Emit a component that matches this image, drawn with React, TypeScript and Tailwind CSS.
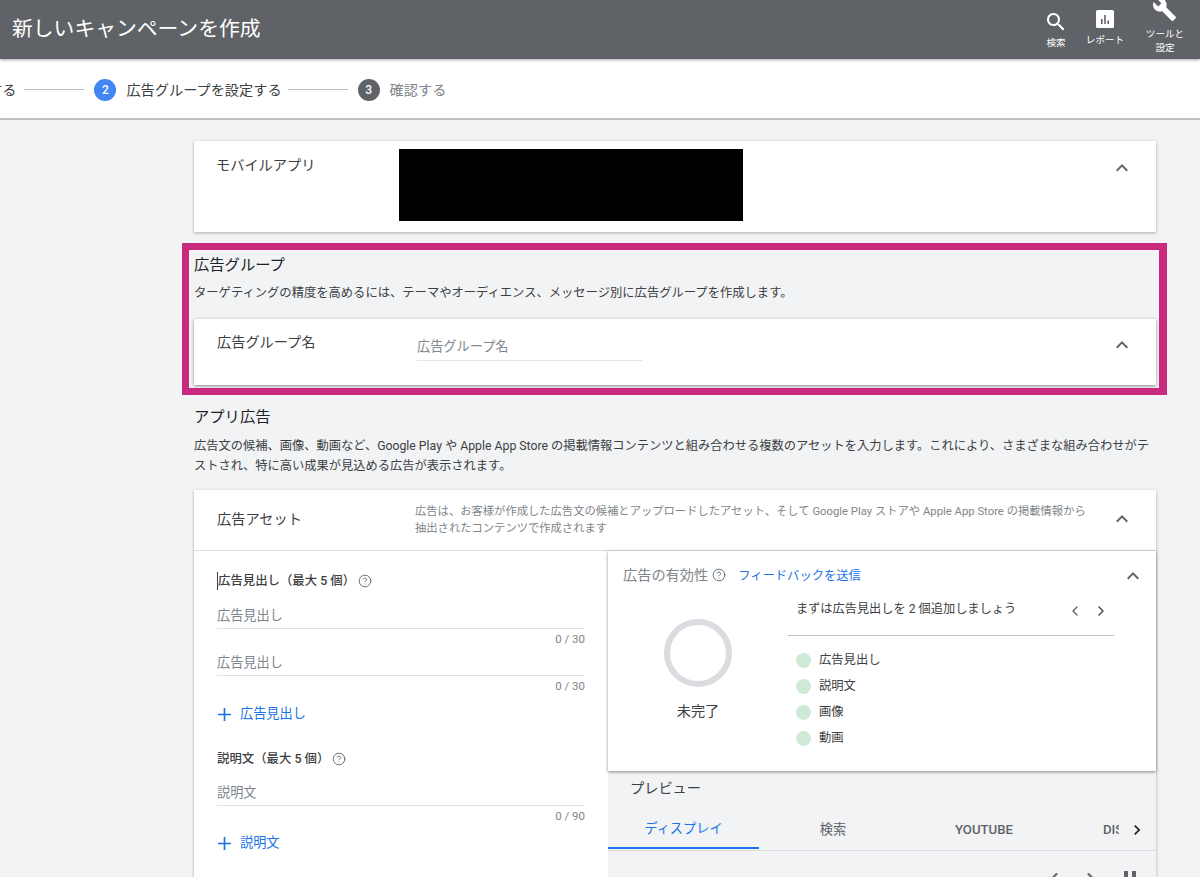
import { ChevronLeft, ChevronRight, CircleHelp } from "lucide-react";

const Help = () => <CircleHelp className="h-[14px] w-[14px] text-[#5f6368]" strokeWidth={1.5} />;

// material expand_less, 1:1 scale
const Collapse = ({ className }: { className: string }) => (
  <svg viewBox="4 4 16 16" className={`h-[16px] w-[16px] shrink-0 fill-[#5f6368] ${className}`}>
    <path d="M12 8l-6 6 1.41 1.41L12 10.83l4.59 4.58L18 14z" />
  </svg>
);

const AddIcon = () => (
  <svg viewBox="0 0 14 14" className="ml-[1px] h-[13px] w-[13px] fill-[#1a73e8]">
    <path d="M6.1 0h1.8v6.1H14v1.8H7.9V14H6.1V7.9H0V6.1h6.1z" />
  </svg>
);

const Field = ({ label, count }: { label: string; count: string }) => (
  <div>
    <div className="h-[28px] border-b border-[#dfe1e5] pt-[4px] text-[13.2px] leading-[22px] text-[#80868b]">{label}</div>
    <div className="h-[19px] pt-[2px] text-right text-[11.5px] leading-[16px] text-[#80868b]">{count}</div>
  </div>
);

const Legend = ({ label }: { label: string }) => (
  <div className="flex h-[26.2px] items-center gap-[8px] pl-[8px] text-[12.3px] text-[#3c4043]">
    <span className="h-[15px] w-[15px] rounded-full bg-[#ceead6]" />
    {label}
  </div>
);

export default function App() {
  return (
    <div
      className="h-[877px] w-[1200px] overflow-hidden bg-[#f1f3f4] text-[#202124]"
      style={{ fontFamily: '"Roboto", "Noto Sans CJK JP", sans-serif' }}
    >
      {/* Header */}
      <header className="relative z-10 flex h-[59px] items-center justify-between bg-[#5f6368] pl-[12px] shadow-[0_1px_3px_rgba(0,0,0,0.35)]">
        <h1 className="pt-[1px] text-[20.8px] font-normal text-white">新しいキャンペーンを作成</h1>
        <div className="flex h-full items-start text-[9.6px] leading-[14px] text-white">
          <div className="flex w-[48px] flex-col items-center pt-[10px]">
            <svg viewBox="0 0 24 24" className="h-[24px] w-[24px] fill-white">
              <path d="M15.5 14h-.79l-.28-.27C15.41 12.59 16 11.11 16 9.5 16 5.91 13.09 3 9.5 3S3 5.91 3 9.5 5.91 16 9.5 16c1.61 0 3.09-.59 4.23-1.57l.27.28v.79l5 4.99L20.49 19l-4.99-5zm-6 0C7.01 14 5 11.99 5 9.5S7.01 5 9.5 5 14 7.01 14 9.5 11.99 14 9.5 14z" />
            </svg>
            <span className="mt-[2px]">検索</span>
          </div>
          <div className="flex w-[50px] flex-col items-center pt-[10px]">
            <svg viewBox="0 0 18 18" className="h-[18px] w-[18px]">
              <rect width="18" height="18" rx="1.5" fill="#fff" />
              <path d="M5 9h1.6v5H5zM8.2 5h1.6v9H8.2zM11.4 10.5H13V14h-1.6z" fill="#5f6368" />
            </svg>
            <span className="mt-[5px] whitespace-nowrap">レポート</span>
          </div>
          <div className="relative flex w-[70px] flex-col items-center pt-[27px] text-center">
            <svg viewBox="0 0 24 24" className="absolute left-[22px] top-[-3px] h-[25px] w-[25px] fill-white">
              <path d="M22.7 19l-9.1-9.1c.9-2.3.4-5-1.5-6.9-2-2-5-2.4-7.4-1.3L9 6 6 9 1.6 4.7C.4 7.1.9 10.1 2.9 12.1c1.9 1.9 4.6 2.4 6.9 1.5l9.1 9.1c.4.4 1 .4 1.4 0l2.3-2.3c.5-.4.5-1.1.1-1.4z" />
            </svg>
            <span>ツールと<br />設定</span>
          </div>
        </div>
      </header>

      {/* Stepper */}
      <div className="flex h-[61px] items-center overflow-hidden border-b-2 border-[#bdc1c6] bg-white pt-[2px] text-[14.2px]">
        <span className="-ml-[12px] pt-[2px] text-[#3c4043]">する</span>
        <span className="mx-[8px] h-px w-[60px] bg-[#bdc1c6]" />
        <span className="ml-[2px] flex h-[22px] w-[22px] items-center justify-center rounded-full bg-[#4285f4] text-[12px] font-medium text-white">2</span>
        <span className="ml-[10px] pt-[2px] text-[#3c4043]">広告グループを設定する</span>
        <span className="ml-[6px] mr-[10px] h-px w-[60px] bg-[#bdc1c6]" />
        <span className="flex h-[22px] w-[22px] items-center justify-center rounded-full bg-[#5f6368] text-[12px] font-medium text-white">3</span>
        <span className="ml-[10px] pt-[2px] text-[#80868b]">確認する</span>
      </div>

      <main className="ml-[194px] w-[962px] pt-[21px]">
        {/* Mobile app */}
        <section className="flex h-[91px] bg-white pl-[22px] pr-[26px] shadow-[0_1px_3px_rgba(0,0,0,0.3)]">
          <div className="w-[183px] pt-[14px] text-[14.2px] leading-[20px] text-[#3c4043]">モバイルアプリ</div>
          <div className="mt-[8px] h-[72px] w-[344px] bg-black" />
          <Collapse className="ml-auto mt-[19px]" />
        </section>

        {/* Ad group */}
        <section className="-ml-[12px] -mr-[11px] mt-[11px] h-[152px] border-[7px] border-r-[8px] border-[#c92a7e] pl-[5px] pr-[3px]">
          <h2 className="h-[26px] pt-[4px] text-[15.3px] font-normal leading-[22px]">広告グループ</h2>
          <p className="mt-[7px] h-[20px] text-[12.3px] leading-[20px] text-[#3c4043]">ターゲティングの精度を高めるには、テーマやオーディエンス、メッセージ別に広告グループを作成します。</p>
          <div className="mt-[16px] flex h-[66px] bg-white pl-[23px] pr-[26px] shadow-[0_1px_3px_rgba(0,0,0,0.45)]">
            <div className="w-[200px] pt-[13px] text-[14.2px] leading-[20px] text-[#3c4043]">広告グループ名</div>
            <div className="mt-[15px] h-[27px] w-[225px] border-b border-[#e3e5e8] pt-[1px] text-[13.2px] leading-[24px] text-[#80868b]">広告グループ名</div>
            <Collapse className="ml-auto mt-[18px]" />
          </div>
        </section>

        {/* App ads */}
        <h2 className="mt-[11px] h-[24px] text-[15.3px] font-normal leading-[22px]">アプリ広告</h2>
        <p className="mt-[6px] text-[12.25px] leading-[20px] text-[#3c4043]">
          広告文の候補、画像、動画など、Google Play や Apple App Store の掲載情報コンテンツと組み合わせる複数のアセットを入力します。これにより、さまざまな組み合わせがテストされ、特に高い成果が見込める広告が表示されます。
        </p>

        <section className="mt-[14px] bg-white shadow-[0_1px_3px_rgba(0,0,0,0.3)]">
          <div className="flex h-[61px] border-b border-[#dadce0] pl-[23px] pr-[26px]">
            <div className="w-[198px] pt-[19px] text-[14.2px] leading-[20px] text-[#3c4043]">広告アセット</div>
            <div className="w-[675px] pt-[13px] text-[11.3px] leading-[17px] text-[#80868b]">
              広告は、お客様が作成した広告文の候補とアップロードしたアセット、そして Google Play ストアや Apple App Store の掲載情報から抽出されたコンテンツで作成されます
            </div>
            <Collapse className="ml-auto mt-[21px]" />
          </div>

          <div className="flex">
            {/* Left column */}
            <div className="h-[327px] w-[414px] pl-[23px] pr-[23px] pt-[21px]">
              <div className="flex items-center gap-[3px] text-[12.4px] font-medium leading-[18px] text-[#3c4043]">
                <span className="border-l border-[#3c4043]">広告見出し（最大 5 個）</span>
                <Help />
              </div>
              <div className="mt-[11px]"><Field label="広告見出し" count="0 / 30" /></div>
              <Field label="広告見出し" count="0 / 30" />
              <div className="mt-[9px] flex items-center gap-[9px] text-[13.2px] leading-[20px] text-[#1a73e8]">
                <AddIcon />
                広告見出し
              </div>
              <div className="mt-[26px] flex items-center gap-[3px] text-[12.4px] font-medium leading-[18px] text-[#3c4043]">
                <span>説明文（最大 5 個）</span>
                <Help />
              </div>
              <div className="mt-[10px]"><Field label="説明文" count="0 / 90" /></div>
              <div className="mt-[8px] flex items-center gap-[9px] text-[13.2px] leading-[20px] text-[#1a73e8]">
                <AddIcon />
                説明文
              </div>
            </div>

            {/* Right column */}
            <div className="w-[548px] self-start bg-[#f1f3f4]">
              <div className="h-[220px] bg-white shadow-[0_1px_3px_rgba(0,0,0,0.45)]">
                <div className="flex h-[50px] items-center pl-[15px] pr-[15px]">
                  <span className="text-[14.2px] text-[#80868b]">広告の有効性</span>
                  <span className="ml-[4px] -mt-[3px]"><Help /></span>
                  <span className="ml-[12px] text-[12.3px] text-[#1a73e8]">フィードバックを送信</span>
                  <Collapse className="ml-auto" />
                </div>
                <div className="flex">
                  <div className="flex w-[180px] flex-col items-center pt-[18px]">
                    <div className="h-[68px] w-[68px] rounded-full border-[6px] border-[#dadce0]" />
                    <span className="mt-[14px] text-[14.2px] leading-[20px] text-[#3c4043]">未完了</span>
                  </div>
                  <div className="w-[326px]">
                    <div className="flex h-[35px] items-start border-b border-[#bdc1c6] pl-[8px] pr-[5px]">
                      <span className="text-[12.2px] leading-[17px] text-[#3c4043]">まずは広告見出しを 2 個追加しましょう</span>
                      <ChevronLeft className="ml-auto mt-[2px] h-[16px] w-[16px] text-[#5f6368]" />
                      <ChevronRight className="ml-[10px] mt-[2px] h-[16px] w-[16px] text-[#3c4043]" />
                    </div>
                    <div className="pt-[11px]">
                      <Legend label="広告見出し" />
                      <Legend label="説明文" />
                      <Legend label="画像" />
                      <Legend label="動画" />
                    </div>
                  </div>
                </div>
              </div>

              <div className="pl-[22px] pt-[7px] text-[14.2px] leading-[20px] text-[#3c4043]">プレビュー</div>
              <div className="mt-[13px] flex h-[40px] items-center border-b border-[#dadce0] pb-[1px] text-[13.2px] text-[#5f6368]">
                <div className="flex h-full w-[151px] items-center justify-center border-b-2 border-[#1a73e8] text-[#1a73e8]">ディスプレイ</div>
                <div className="flex w-[148px] justify-center">検索</div>
                <div className="flex w-[154px] justify-center font-medium">YOUTUBE</div>
                <div className="ml-[42px] w-[16px] overflow-hidden font-medium">DISCOVER</div>
                <svg viewBox="0 0 24 24" className="ml-[8px] h-[20px] w-[20px] fill-[#202124]">
                  <path d="M10 6L8.59 7.41 13.17 12l-4.58 4.59L10 18l6-6z" />
                </svg>
              </div>
              <div className="flex h-[40px] items-start justify-end pr-[20px] pt-[18px] text-[#5f6368]">
                <ChevronLeft className="h-[20px] w-[20px]" strokeWidth={2.5} />
                <ChevronRight className="ml-[17px] h-[20px] w-[20px]" strokeWidth={2.5} />
                <div className="ml-[23px] mt-[2px] flex gap-[4px]">
                  <span className="h-[14px] w-[4px] bg-[#5f6368]" />
                  <span className="h-[14px] w-[4px] bg-[#5f6368]" />
                </div>
              </div>
            </div>
          </div>
        </section>
      </main>
    </div>
  );
}
